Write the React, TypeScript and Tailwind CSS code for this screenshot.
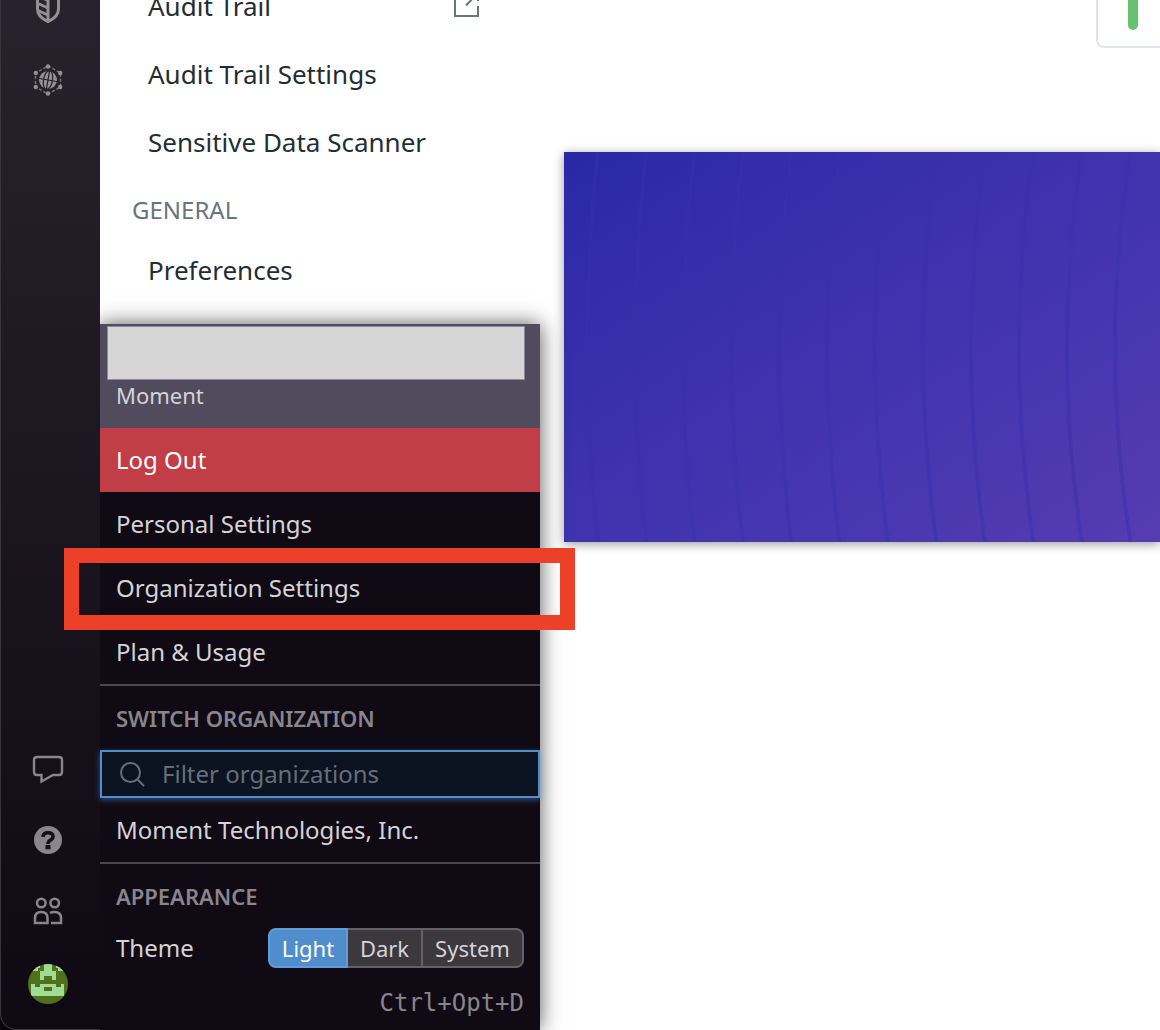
import React from "react";

function ShieldIcon() {
  return (
    <svg width="40" height="40" viewBox="28 -12 40 40" fill="none" stroke="#938f97" strokeWidth="3" aria-hidden="true">
      <path d="M48 -6 L37.5 -2 V9 Q37.5 17 48 21.5 Q58.5 17 58.5 9 V-2 Z" strokeLinejoin="round" />
      <path d="M48 -6 V21" />
      <path d="M37 -4.5 L48 .5 M37 3 L48 8 M38 10.5 L48 15" />
    </svg>
  );
}

function GlobeIcon() {
  return (
    <svg width="40" height="40" viewBox="28 60 40 40" aria-hidden="true">
      <path d="M48 66 L60.500 73 V87 L48 94 L35.500 87 V73 Z" fill="none" stroke="#77737b" strokeWidth="1.500" strokeDasharray="3 2" />
      <g fill="#938f97">
        <circle cx="48" cy="66.500" r="2.200" />
        <circle cx="60.200" cy="73" r="2.200" />
        <circle cx="60.200" cy="87" r="2.200" />
        <circle cx="48" cy="93.500" r="2.200" />
        <circle cx="35.800" cy="87" r="2.200" />
        <circle cx="35.800" cy="73" r="2.200" />
        <circle cx="48" cy="80" r="9" />
      </g>
      <g fill="none" stroke="#26212c" strokeWidth="1.200" transform="rotate(10 48 80)">
        <ellipse cx="48" cy="80" rx="4.500" ry="9.500" />
        <path d="M48 70 V90 M38 80 H58" />
      </g>
    </svg>
  );
}

function ChatIcon() {
  return (
    <svg width="32" height="32" viewBox="32 753 32 32" fill="none" stroke="#89858d" strokeWidth="2.400" aria-hidden="true">
      <path d="M37 757 H59 Q62 757 62 760 V772 Q62 775 59 775 H53 L41.500 781.500 V775 H37 Q34 775 34 772 V760 Q34 757 37 757 Z" />
    </svg>
  );
}

function HelpIcon() {
  return (
    <svg width="32" height="32" viewBox="32 824 32 32" aria-hidden="true">
      <circle cx="48" cy="840" r="14" fill="#89858d" />
      <path d="M43 836.800 Q43.300 832.800 48 832.800 Q53 832.800 53 836.500 Q53 838.800 50.300 840.200 Q48 841.500 48 844" fill="none" stroke="#130d18" strokeWidth="3.600" />
      <rect x="45.500" y="845" width="5" height="4.200" fill="#130d18" />
    </svg>
  );
}

function PeopleIcon() {
  return (
    <svg width="32" height="32" viewBox="32 895 32 32" fill="none" stroke="#89858d" strokeWidth="2.500" aria-hidden="true">
      <circle cx="41.300" cy="903" r="4.300" />
      <circle cx="54.700" cy="903" r="4.300" />
      <path d="M35 923 V918 Q35 912 41 912 Q47.500 912 47.500 918 V923 Z" />
      <path d="M50 912.800 Q51.500 912 54.500 912 Q61 912 61 918 V923 H51" />
    </svg>
  );
}

function Avatar() {
  return (
    <svg className="block" width="40" height="40" viewBox="28 964 40 40" aria-hidden="true">
      <clipPath id="avatar-clip">
        <circle cx="48" cy="984" r="20" />
      </clipPath>
      <g clipPath="url(#avatar-clip)">
        <rect x="28" y="964" width="40" height="40" fill="#50701e" />
        <g fill="#a0dc94">
          <path d="M31 964 H40 V968 H38 V971 H31 Z M56 964 H65 V971 H58 V968 H56 Z" />
          <path d="M44 964 H52 V971 H56 V980 H52 V976 H44 V980 H40 V971 H44 Z" />
          <path fillRule="evenodd" d="M31 984 H35 V987 H40 V984 H56 V987 H61 V984 H64 V996 H31 Z M44 987 V991 H52 V987 Z" />
        </g>
      </g>
    </svg>
  );
}

function ExternalIcon() {
  return (
    <svg width="28" height="28" viewBox="453 -9 28 28" fill="none" stroke="#69747b" strokeWidth="2" aria-hidden="true">
      <path d="M465 -8 H455 V15 H478 V5" />
      <path d="M466 4.500 L478 -8 M470 -8 H478 V0" />
    </svg>
  );
}

function SearchIcon() {
  return (
    <svg width="28" height="28" viewBox="118 760 28 28" fill="none" stroke="#666f78" strokeWidth="2" aria-hidden="true">
      <circle cx="130.500" cy="772.500" r="9.500" />
      <path d="M137.300 779.300 L144 786" />
    </svg>
  );
}

const arcs = Array.from({ length: 24 }, (_, i) => 1746 - i * 48);

function Banner() {
  return (
    <div className="h-[390px] overflow-hidden bg-gradient-to-br from-[#2a28a6] via-[#4033ae] to-[#553cb1] shadow-[0_2px_10px_rgba(0,0,0,0.4)]">
      <svg className="h-full w-full" viewBox="564 152 596 390" preserveAspectRatio="xMinYMid slice" fill="none" stroke="#3a30ac" strokeOpacity="0.5" strokeWidth="3.500" aria-hidden="true">
        {arcs.map((r) => (
          <circle key={r} cx="2333" cy="347" r={r} />
        ))}
      </svg>
    </div>
  );
}

function MenuLink({ children }: { children: React.ReactNode }) {
  return (
    <a href="#" className="flex h-16 items-center px-4">
      {children}
    </a>
  );
}

export default function App() {
  return (
    <div className="relative flex min-h-screen overflow-hidden bg-white font-['Noto_Sans',sans-serif]">
      <div className="w-[100px] shrink-0 bg-[#08040b]">
        <nav aria-label="Main" className="flex h-screen flex-col items-center justify-between rounded-bl-2xl border-b border-l border-[#39343e] bg-gradient-to-b from-[#28222e] to-[#0f0913] pr-[5px] pb-[25px]">
          <div className="-mt-3 flex flex-col items-center gap-8">
            <a href="#" aria-label="Security"><ShieldIcon /></a>
            <a href="#" aria-label="Network"><GlobeIcon /></a>
          </div>
          <div className="flex flex-col items-center gap-[37px]">
            <div className="flex flex-col items-center gap-[39px]">
              <a href="#" aria-label="Chat"><ChatIcon /></a>
              <a href="#" aria-label="Help"><HelpIcon /></a>
              <a href="#" aria-label="Team"><PeopleIcon /></a>
            </div>
            <button type="button" aria-label="Account"><Avatar /></button>
          </div>
        </nav>
      </div>

      <aside className="-mt-7 w-[464px] shrink-0 text-[26px] text-[#1f2d35]">
        <a href="#" className="flex h-[68px] items-center justify-between pr-[83px] pl-12">
          Audit Trail
          <ExternalIcon />
        </a>
        <a href="#" className="flex h-[68px] items-center pl-12">Audit Trail Settings</a>
        <a href="#" className="flex h-[68px] items-center pl-12">Sensitive Data Scanner</a>
        <h2 className="flex h-[68px] items-center pl-8 text-2xl text-[#69747b]">GENERAL</h2>
        <a href="#" className="flex h-[52px] items-center pl-12">Preferences</a>
      </aside>

      <main className="min-w-0 flex-1">
        <div className="mb-[104px] flex justify-end">
          <div className="h-12 w-16 rounded-bl-lg border-b-2 border-l-2 border-[#e1e5ea] pl-[30px]">
            <div className="h-[30px] w-[10px] rounded-b-full bg-[#67c171]" />
          </div>
        </div>
        <Banner />
      </main>

      <div className="absolute bottom-0 left-[100px] w-[440px] text-2xl text-[#d5d3d7]">
        <div className="absolute inset-0 bg-[#100a14] shadow-[0_0_20px_rgba(0,0,0,0.65)] [clip-path:inset(-30px_-30px_0_0)]" />
        <div className="relative">
          <div className="h-[104px] bg-[#504c5e] pt-[2px] pr-[15px] pl-[7px]">
            <div className="h-[54px] border border-[#8e8b95] bg-[#d6d6d6]" />
            <p className="pl-[9px] text-[22px] leading-[30px]">Moment</p>
          </div>
          <button type="button" className="flex h-16 w-full items-center bg-[#c13e47] px-4 text-white">Log Out</button>
          <MenuLink>Personal Settings</MenuLink>
          <div className="relative">
            <MenuLink>Organization Settings</MenuLink>
            <div className="pointer-events-none absolute -top-2 -right-[35px] -left-9 h-[82px] border-[15px] border-[#ec4128]" />
          </div>
          <MenuLink>Plan &amp; Usage</MenuLink>
          <section className="border-t-2 border-[#4c474f]">
            <h2 className="flex h-16 items-center px-4 pt-0.5 text-[22px] font-semibold text-[#89858d]">SWITCH ORGANIZATION</h2>
            <label className="flex h-12 items-center gap-4 border-2 border-[#4f8fd0] bg-[#0b1220] px-4 shadow-[0_2px_6px_rgba(79,143,208,0.5)]">
              <SearchIcon />
              <input type="text" aria-label="Filter organizations" placeholder="Filter organizations" className="min-w-0 flex-1 bg-transparent outline-none placeholder:text-[#666f78]" />
            </label>
            <MenuLink>Moment Technologies, Inc.</MenuLink>
          </section>
          <section className="border-t-2 border-[#4c474f] px-4">
            <h2 className="flex h-16 items-center pt-0.5 text-[22px] font-semibold text-[#89858d]">APPEARANCE</h2>
            <div className="flex h-10 items-center justify-between">
              <span>Theme</span>
              <div className="flex h-10 text-[22px]" role="group" aria-label="Theme">
                <button type="button" className="w-20 rounded-l-lg border-2 border-[#629bd8] bg-[#4f8dcc] pt-0.5 text-white">Light</button>
                <button type="button" className="w-[75px] border-y-2 border-r-2 border-[#636166] bg-[#3b383e] pt-0.5">Dark</button>
                <button type="button" className="w-[101px] rounded-r-lg border-y-2 border-r-2 border-[#636166] bg-[#3b383e] pt-0.5">System</button>
              </div>
            </div>
            <p className="flex h-[62px] items-center justify-end pt-2 font-['DejaVu_Sans_Mono',monospace] text-[#89858d]">Ctrl+Opt+D</p>
          </section>
        </div>
      </div>
    </div>
  );
}
